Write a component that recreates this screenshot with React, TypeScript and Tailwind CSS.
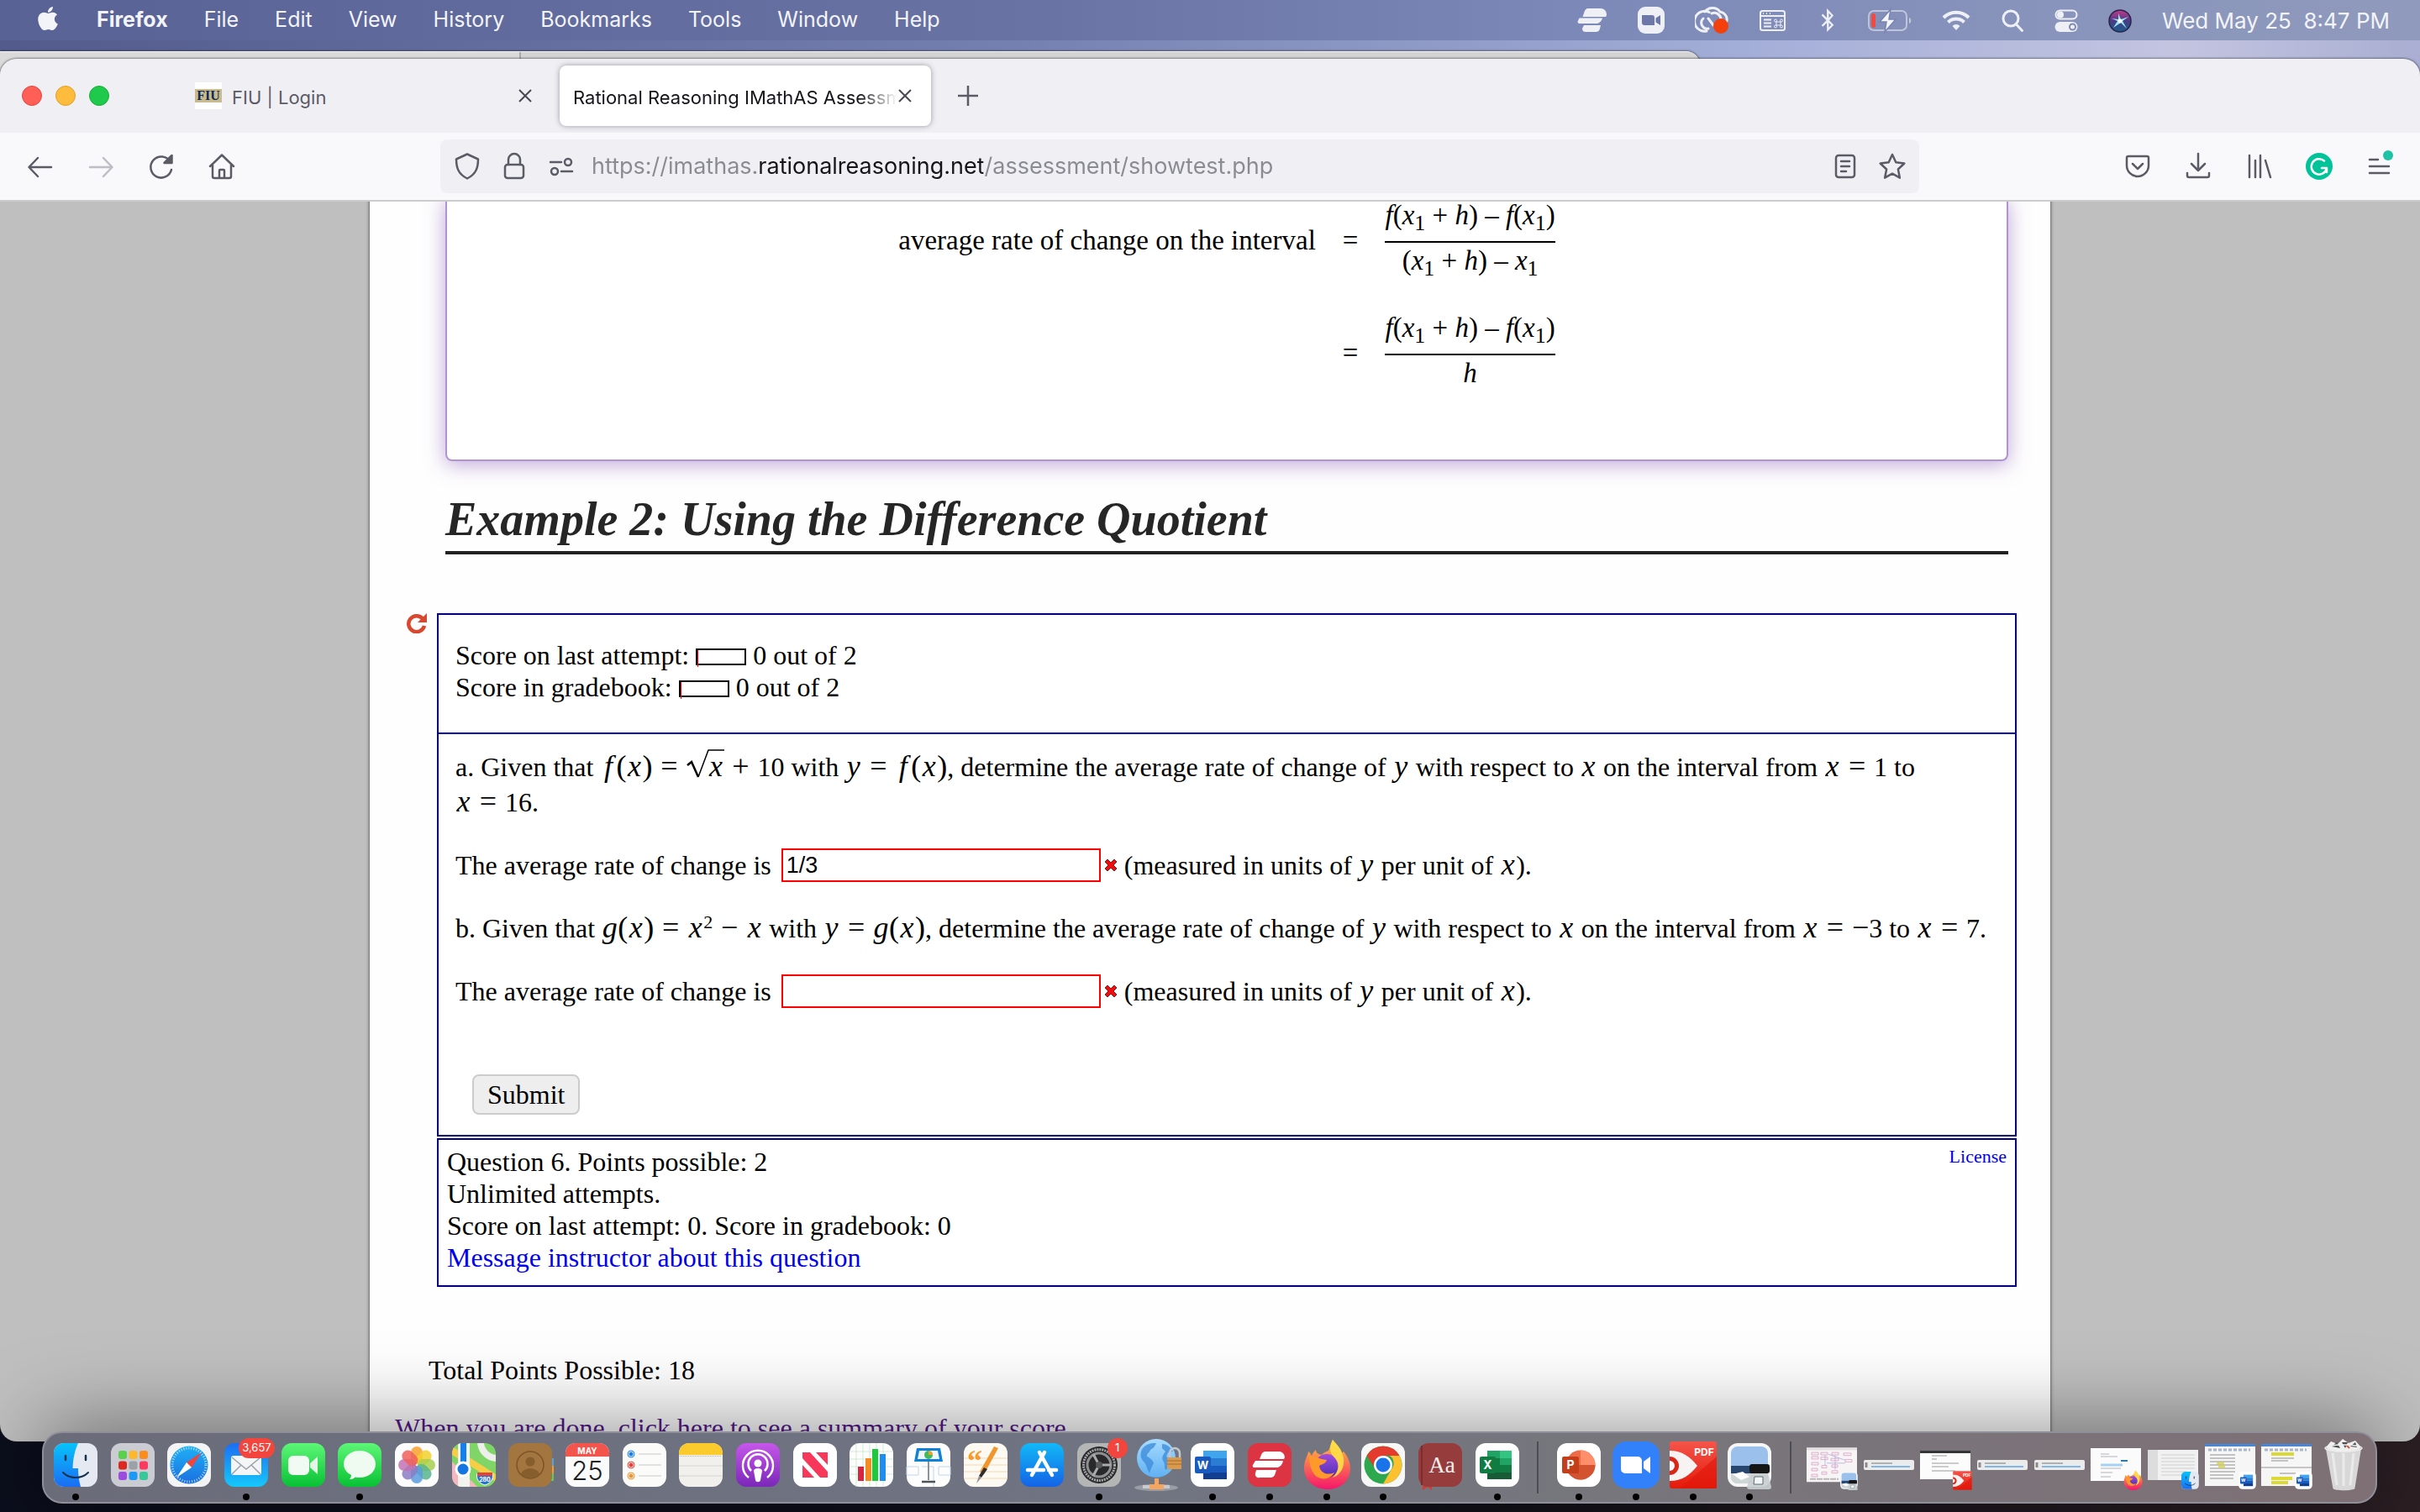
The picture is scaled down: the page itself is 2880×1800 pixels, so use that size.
import type { ReactNode } from 'react'
import { FaApple, FaBluetoothB } from 'react-icons/fa'

const MENUS = ['File', 'Edit', 'View', 'History', 'Bookmarks', 'Tools', 'Window', 'Help']

/* ---------- menu bar ---------- */

const StatusIcons: React.FC = () => (
    <>
        <svg className="h-8 w-9" viewBox="0 0 36 32" fill="#eef0f6" aria-hidden="true">
            <path d="M13 2h15a7 7 0 017 7c0 1-.3 2-.8 3H6.500l1.500-4.500C9 4 10.500 2 13 2z" />
            <path d="M2.500 13.500H30a9 9 0 01-6 6.500H2.500a2 2 0 01-1.800-2.700z" />
            <path d="M8 22h20l-1 4a5 5 0 01-5 4H10a4 4 0 01-4-4z" />
        </svg>
        <svg className="h-8 w-8" viewBox="0 0 32 32" aria-hidden="true">
            <rect width="32" height="32" rx="9" fill="#eef0f6" />
            <path d="M5 10h12a3 3 0 013 3v9H8a3 3 0 01-3-3zM21.500 13.500L27 10v12l-5.500-3.500z" fill="#6d78a9" />
        </svg>
        <svg className="h-8 w-10" viewBox="0 0 40 32" fill="none" aria-hidden="true">
            <path
                d="M14 29A12 12 0 1117 6.500M10 14a7 7 0 006 12M16 14l6 8M12 6c4-6 14-6 18 0 5 1 9 5 8 11M20 8c5-2 10 1 11 6"
                stroke="#eef0f6"
                strokeWidth="3"
                strokeLinecap="round"
            />
            <circle cx="31" cy="23" r="9" fill="#f4400c" />
        </svg>
        <svg className="h-8 w-[34px]" viewBox="0 0 34 32" fill="none" stroke="#eef0f6" aria-hidden="true">
            <rect x="2" y="5" width="29" height="23" rx="2.500" strokeWidth="2" />
            <path d="M2 11h29" strokeWidth="2" />
            <path d="M5 8h1M9 8h1M13 8h1" strokeWidth="2" />
            <path d="M6 15.500h9M6 19.500h9M6 23.500h9" strokeWidth="2" />
            <path
                d="M21 18h5v4h-5zM21 18h-1a1.500 1.500 0 111.500-1.500zM26 18h1a1.500 1.500 0 10-1.500-1.500zM21 22h-1a1.500 1.500 0 101.500 1.500zM26 22h1a1.500 1.500 0 11-1.500 1.500z"
                strokeWidth="1"
            />
        </svg>
        <FaBluetoothB className="h-7 w-6 text-[#eef0f6]" aria-hidden="true" />
        <svg className="h-8 w-[52px]" viewBox="0 0 52 32" fill="none" aria-hidden="true">
            <rect x="1" y="5" width="45" height="23" rx="6" stroke="#eef0f6" strokeOpacity=".55" strokeWidth="2" />
            <path d="M49 13c3 1 3 6 0 7z" fill="#eef0f6" fillOpacity=".6" />
            <rect x="4" y="8" width="5" height="17" rx="2.500" fill="#f5483f" />
            <path d="M27 3L14 18h8l-2 12 13-15h-8l2-12z" fill="#f4f5fa" stroke="#7984b2" strokeWidth="1.500" />
        </svg>
        <svg className="h-8 w-[34px]" viewBox="0 0 34 32" fill="none" stroke="#eef0f6" strokeWidth="4" aria-hidden="true">
            <path d="M2 13a21 21 0 0130 0M7.500 18.500a13.500 13.500 0 0119 0" />
            <path d="M17 28l-4.500-5a6 6 0 019 0z" fill="#eef0f6" stroke="none" />
        </svg>
        <svg className="h-8 w-7" viewBox="0 0 28 32" fill="none" stroke="#eef0f6" strokeWidth="3" aria-hidden="true">
            <circle cx="12" cy="14" r="9" />
            <path d="M18.500 21l7 7.500" strokeLinecap="round" />
        </svg>
        <svg className="h-8 w-7" viewBox="0 0 28 32" fill="none" aria-hidden="true">
            <rect x="1.500" y="4.500" width="25" height="10" rx="5" stroke="#eef0f6" strokeWidth="2" />
            <circle cx="7" cy="9.500" r="4" fill="#eef0f6" />
            <rect x=".5" y="18" width="27" height="12" rx="6" fill="#eef0f6" />
            <circle cx="21.500" cy="24" r="3.500" stroke="#7f8ab5" strokeWidth="2" />
        </svg>
        <svg className="h-8 w-7" viewBox="0 0 28 32" aria-hidden="true">
            <defs>
                <linearGradient id="siri" x1="0" y1="0" x2="0" y2="1">
                    <stop offset="0" stopColor="#c23a8b" />
                    <stop offset=".5" stopColor="#4b3a86" />
                    <stop offset="1" stopColor="#1a5f8c" />
                </linearGradient>
            </defs>
            <circle cx="14" cy="17" r="13" fill="url(#siri)" stroke="#272347" strokeWidth="1.500" />
            <path d="M12 8l3 7 9-3-7 5 5 9-7-7-9 6 5-8-7-3 8 1z" fill="#8fe6f2" />
            <circle cx="14" cy="17" r="2.500" fill="#ffffff" />
        </svg>
    </>
)

const MenuBar: React.FC = () => (
    <header className="flex h-12 shrink-0 items-center bg-[linear-gradient(90deg,#596295,#6873a4_42%,#7c88b7_65%,#8894bb_85%,#8f9abc)] pr-9 pl-[42px] text-[25px] text-[#f3f4f8]">
        <nav className="flex items-center gap-[43px]" aria-label="Application menu">
            <FaApple className="mb-1 h-8 w-[30px]" aria-hidden="true" />
            <button className="font-bold">Firefox</button>
            {MENUS.map((menu) => (
                <button key={menu}>{menu}</button>
            ))}
        </nav>
        <div className="ml-auto flex items-center gap-9">
            <StatusIcons />
            <span className="text-[26px] whitespace-pre">Wed May 25  8:47 PM</span>
        </div>
    </header>
)

/* ---------- browser chrome ---------- */

const CloseIcon: React.FC = () => (
    <svg className="h-[18px] w-[18px]" viewBox="0 0 18 18" stroke="#4a4953" strokeWidth="2" aria-hidden="true">
        <path d="M2 2l14 14M16 2L2 16" />
    </svg>
)

const TabStrip: React.FC = () => (
    <div className="flex h-[88px] items-center bg-[#f0eff4] pl-[26px]">
        <div className="flex gap-4">
            <button aria-label="Close window" className="h-6 w-6 rounded-full border border-[#e2463f] bg-[#ff5f57]" />
            <button aria-label="Minimize window" className="h-6 w-6 rounded-full border border-[#dfa023] bg-[#febc3f]" />
            <button aria-label="Zoom window" className="h-6 w-6 rounded-full border border-[#1aaa35] bg-[#1fc94c]" />
        </div>
        <div className="ml-[86px] flex items-center gap-2 text-[22px]">
            <div className="flex h-[72px] w-[442px] items-center gap-3 pr-6 pl-4 text-[#5b5b66]">
                <span className="flex h-8 w-8 items-center justify-center bg-white">
                    <span className="w-full bg-[#c9bb8e] text-center font-[Liberation_Serif] text-[16px] leading-4 font-bold text-[#0b2a55]">
                        FIU
                    </span>
                </span>
                <span className="flex-1 pt-1">FIU | Login</span>
                <button aria-label="Close tab">
                    <CloseIcon />
                </button>
            </div>
            <div className="flex h-[72px] w-[442px] items-center rounded-lg bg-white pr-[22px] pl-4 text-[#15141a] shadow-[0_0_6px_rgba(80,80,90,0.55)]">
                <span className="flex-1 overflow-hidden pt-1 whitespace-nowrap mask-[linear-gradient(90deg,#000_88%,transparent)]">
                    Rational Reasoning IMathAS Assessment
                </span>
                <button aria-label="Close tab">
                    <CloseIcon />
                </button>
            </div>
            <button aria-label="New tab" className="ml-[22px]">
                <svg className="h-7 w-7" viewBox="0 0 28 28" stroke="#5b5b66" strokeWidth="2.500" aria-hidden="true">
                    <path d="M14 2v24M2 14h24" />
                </svg>
            </button>
        </div>
    </div>
)

const ToolIcon: React.FC<{ label: string; color?: string; children: ReactNode }> = ({
    label,
    color = '#5b5b66',
    children,
}) => (
    <button aria-label={label}>
        <svg
            className="h-8 w-8 overflow-visible"
            viewBox="0 0 32 32"
            fill="none"
            stroke={color}
            strokeWidth="2.500"
            strokeLinecap="round"
            strokeLinejoin="round"
            aria-hidden="true"
        >
            {children}
        </svg>
    </button>
)

const Toolbar: React.FC = () => (
    <div className="flex h-20 items-center bg-[#f9f9fb] px-8">
        <div className="flex gap-10">
            <ToolIcon label="Back">
                <path d="M29 17H3M13 6L2.500 17 13 28" />
            </ToolIcon>
            <ToolIcon label="Forward" color="#bdbdc4">
                <path d="M3 17h26M19 6l10.500 11L19 28" />
            </ToolIcon>
            <ToolIcon label="Reload">
                <path d="M26.500 10.500A12.500 12.500 0 1028 20" />
                <path d="M28.500 3v9h-9z" fill="#5b5b66" />
            </ToolIcon>
            <ToolIcon label="Home">
                <path d="M2 16L16 2.500 30 16M5 14v14a2 2 0 002 2h18a2 2 0 002-2V14M13 29v-8a1 1 0 011-1h4a1 1 0 011 1v8" />
            </ToolIcon>
        </div>
        <div className="mx-[244px] flex h-16 flex-1 items-center rounded-lg bg-[#f0eff4] px-4">
            <div className="flex gap-6">
                <ToolIcon label="Tracking protection">
                    <path d="M16 1.500L29 7.500c0 11-3 18-13 23C6 25.500 3 18.500 3 7.500z" />
                </ToolIcon>
                <ToolIcon label="Connection secure">
                    <rect x="5" y="14" width="22" height="16" rx="3" />
                    <path d="M9 14V8a7 7 0 0114 0v6" />
                </ToolIcon>
                <ToolIcon label="Permissions">
                    <circle cx="24" cy="11" r="4" />
                    <circle cx="8" cy="22" r="4" />
                    <path d="M3 11h13M16 22h13" />
                </ToolIcon>
            </div>
            <input
                aria-label="Address"
                className="ml-5 min-w-0 flex-1 bg-[linear-gradient(90deg,#8a8a92_198px,#15141a_198px,#15141a_466px,#8a8a92_466px)] bg-clip-text text-[27px] text-transparent outline-none"
                defaultValue="https://imathas.rationalreasoning.net/assessment/showtest.php"
            />
            <div className="flex gap-6">
                <ToolIcon label="Reader view">
                    <rect x="5" y="3" width="22" height="26" rx="3" />
                    <path d="M11 10h10M11 16h10M11 22h6" />
                </ToolIcon>
                <ToolIcon label="Bookmark this page">
                    <path d="M16 2l4.300 9.300 10 1.200-7.400 7 2 10.200L16 24.700 7.100 29.700l2-10.200-7.400-7 10-1.200z" />
                </ToolIcon>
            </div>
        </div>
        <div className="flex gap-10">
            <ToolIcon label="Save to Pocket">
                <path d="M5 4h22a2 2 0 012 2v9a13 13 0 01-26 0V6a2 2 0 012-2zM10 13l6 6 6-6" />
            </ToolIcon>
            <ToolIcon label="Downloads">
                <path d="M16 1v20M8 13l8 8 8-8M3 24v3a2 2 0 002 2h22a2 2 0 002-2v-3" />
            </ToolIcon>
            <ToolIcon label="Library">
                <path d="M5 3v26M12 9v20M18 3v26M24 9l6 20" />
            </ToolIcon>
            <ToolIcon label="Grammarly">
                <circle cx="16" cy="16" r="16" fill="#00c39a" stroke="none" />
                <path d="M22 9.500A9.200 9.200 0 1025 18h-6M25 18v5" stroke="#ffffff" />
            </ToolIcon>
            <ToolIcon label="Open application menu">
                <path d="M4 8h10M4 16h23M4 24h23" />
                <circle cx="26" cy="3" r="6" fill="#1ec2a4" stroke="none" />
            </ToolIcon>
        </div>
    </div>
)

/* ---------- math helpers ---------- */

const V: React.FC<{ children: ReactNode }> = ({ children }) => (
    <i className="inline-block w-[19px] text-center text-[36px] leading-none">{children}</i>
)

const P: React.FC<{ children: ReactNode }> = ({ children }) => (
    <span className="inline-block w-3 text-center text-[36px] leading-none">{children}</span>
)

const Op: React.FC<{ children: ReactNode }> = ({ children }) => (
    <span className="inline-block w-10 text-center text-[36px] leading-none">{children}</span>
)

const Fn: React.FC<{ name: string }> = ({ name }) => (
    <>
        <V>{name}</V>
        <P>(</P>
        <V>x</V>
        <P>)</P>
    </>
)

const Sqrt: React.FC = () => (
    <span className="relative inline-block pl-[26px]">
        <svg
            className="absolute -top-px left-0 h-9 w-[46px]"
            viewBox="0 0 46 36"
            fill="none"
            stroke="black"
            aria-hidden="true"
        >
            <path d="M2 20l5-4 8 18" strokeWidth="2.500" />
            <path d="M15 34L27 2h19" strokeWidth="1.500" />
        </svg>
        <V>x</V>
    </span>
)

const Sub1: React.FC = () => <sub className="text-[26px]">1</sub>

const Fraction: React.FC<{ top: ReactNode; bottom: ReactNode }> = ({ top, bottom }) => (
    <div className="min-w-[201px] text-center whitespace-nowrap">
        <div className="h-[54px] border-b-2 border-black pt-0.5">{top}</div>
        <div className="h-[38px] pt-0.5">{bottom}</div>
    </div>
)

const Quotient = (
    <>
        <i>f</i>(<i>x</i>
        <Sub1 /> + <i>h</i>) – <i>f</i>(<i>x</i>
        <Sub1 />)
    </>
)

/* ---------- assessment page ---------- */

const ScoreLine: React.FC<{ label: string }> = ({ label }) => (
    <div className="flex items-center">
        {label}
        <span className="mt-1 mr-2 ml-2 h-5 w-[60px] border-2 border-black">
            <span className="block h-5 w-px bg-[#ff0000]" />
        </span>
        0 out of 2
    </div>
)

const Answer: React.FC<{ id: string; value: string }> = ({ id, value }) => (
    <div className="flex items-center">
        <label htmlFor={id}>The average rate of change is</label>
        <input
            id={id}
            defaultValue={value}
            className="ml-3 h-10 w-[380px] border-2 border-[#ff0000] bg-white px-1 font-[Liberation_Sans] text-[27px] outline-none"
        />
        <svg className="mr-2 ml-1 h-4 w-4" viewBox="0 0 16 16" aria-label="Incorrect">
            <path
                d="M4 1l4 4 4-4 3 3-4 4 4 4-3 3-4-4-4 4-3-3 4-4-4-4z"
                fill="#f10d0d"
                stroke="#7b2020"
                strokeWidth="1"
            />
        </svg>
        <span>
            (measured in units of <V>y</V> per unit of <V>x</V>).
        </span>
    </div>
)

const Question: React.FC = () => (
    <div className="mt-[70px] flex gap-3 pr-10 pl-11">
        <button aria-label="Try a similar question" className="h-6 w-6">
            <svg className="h-6 w-6" viewBox="0 0 24 24" fill="none" aria-hidden="true">
                <path d="M19 6.500A9.500 9.500 0 1021 15" stroke="#d9472f" strokeWidth="4.500" />
                <path d="M24 0v11H13z" fill="#d9472f" />
            </svg>
        </button>
        <div className="flex-1">
            <section className="border-2 border-[#000080] bg-white">
                <div className="border-b-2 border-[#000080] pt-[29px] pb-[35px] pl-5">
                    <ScoreLine label="Score on last attempt:" />
                    <ScoreLine label="Score in gradebook:" />
                </div>
                <form className="flex flex-col gap-[33px] px-5 pt-[18px] pb-6 leading-[42px]">
                    <p>
                        a. Given that{' '}
                        <span className="whitespace-nowrap">
                            <Fn name="f" />
                            <Op>=</Op>
                            <Sqrt />
                            <Op>+</Op>10
                        </span>{' '}
                        with{' '}
                        <span className="whitespace-nowrap">
                            <V>y</V>
                            <Op>=</Op>
                            <Fn name="f" />,
                        </span>{' '}
                        determine the average rate of change of <V>y</V> with respect to <V>x</V> on the interval from{' '}
                        <span className="whitespace-nowrap">
                            <V>x</V>
                            <Op>=</Op>1
                        </span>{' '}
                        to{' '}
                        <span className="whitespace-nowrap">
                            <V>x</V>
                            <Op>=</Op>16.
                        </span>
                    </p>
                    <Answer id="qn0" value="1/3" />
                    <p>
                        b. Given that{' '}
                        <span className="whitespace-nowrap">
                            <Fn name="g" />
                            <Op>=</Op>
                            <V>x</V>
                            <sup className="text-[22px]">2</sup>
                            <Op>−</Op>
                            <V>x</V>
                        </span>{' '}
                        with{' '}
                        <span className="whitespace-nowrap">
                            <V>y</V>
                            <Op>=</Op>
                            <Fn name="g" />,
                        </span>{' '}
                        determine the average rate of change of <V>y</V> with respect to <V>x</V> on the interval from{' '}
                        <span className="whitespace-nowrap">
                            <V>x</V>
                            <Op>=</Op>
                            <span className="text-[36px] leading-none">−</span>3
                        </span>{' '}
                        to{' '}
                        <span className="whitespace-nowrap">
                            <V>x</V>
                            <Op>=</Op>7.
                        </span>
                    </p>
                    <Answer id="qn1" value="" />
                    <button
                        type="button"
                        className="mt-[45px] ml-5 h-12 self-start rounded-lg border-2 border-[#cccccc] bg-[#eeeeee] px-4 leading-none"
                    >
                        Submit
                    </button>
                </form>
            </section>
            <section className="mt-0.5 flex justify-between border-2 border-[#000080] bg-white pt-[7px] pr-[10px] pb-[14px] pl-[10px]">
                <div>
                    <p>Question 6. Points possible: 2</p>
                    <p>Unlimited attempts.</p>
                    <p>Score on last attempt: 0. Score in gradebook: 0</p>
                    <a href="#message" className="text-[#0000ee]">
                        Message instructor about this question
                    </a>
                </div>
                <a href="#license" className="text-[22px] leading-[26px] text-[#0000ee]">
                    License
                </a>
            </section>
        </div>
    </div>
)

const AssessmentPage: React.FC = () => (
    <main className="flex-1 overflow-hidden border-t-2 border-[#cccccc] bg-[#bfbfbf] font-[Liberation_Serif,serif] text-[32px] leading-[38px] text-black">
        <div className="mx-auto min-h-full max-w-[2000px] bg-[#fefefe] shadow-[0_0_4px_#333333]">
            <div className="mr-[50px] ml-[90px]">
                <div className="rounded-b-lg border-2 border-t-0 border-[#b193d1] bg-white shadow-[0_4px_24px_rgba(130,80,180,0.5)]">
                    <div className="-mt-[5px] grid grid-cols-[auto_auto_auto] items-start justify-center gap-x-8 gap-y-[42px] pb-[86px] text-[33px]">
                        <p className="mt-8">average rate of change on the interval</p>
                        <span className="mt-8">=</span>
                        <Fraction
                            top={Quotient}
                            bottom={
                                <>
                                    (<i>x</i>
                                    <Sub1 /> + <i>h</i>) – <i>x</i>
                                    <Sub1 />
                                </>
                            }
                        />
                        <span className="col-start-2 mt-8">=</span>
                        <Fraction top={Quotient} bottom={<i>h</i>} />
                    </div>
                </div>
                <h2 className="mt-[37px] border-b-4 border-[#222222] pb-1.5 text-[56px] leading-[64px] font-bold text-[#262626] italic">
                    Example 2: Using the Difference Quotient
                </h2>
            </div>
            <Question />
            <p className="mt-20 pl-[70px]">Total Points Possible: 18</p>
            <a href="#summary" className="mt-[31px] block pl-[30px] text-[#551a8b]">
                When you are done, click here to see a summary of your score
            </a>
        </div>
    </main>
)

/* ---------- dock ---------- */

const Tile: React.FC<{ fill: string }> = ({ fill }) => <rect width="52" height="52" rx="12" fill={fill} />

const FinderArt = (
    <>
        <Tile fill="#e4e9f2" />
        <path d="M12 0h17c-4 9-6 18-6.500 30H29c0 8 1 15 3 22H12A12 12 0 010 40V12A12 12 0 0112 0z" fill="url(#finder)" />
        <path d="M14 15v5M38 15v5" stroke="#16324f" strokeWidth="2.500" strokeLinecap="round" />
        <path d="M11 35c8 8 22 8 30 0" fill="none" stroke="#16324f" strokeWidth="2" strokeLinecap="round" />
    </>
)

const WordArt = (
    <>
        <Tile fill="#ffffff" />
        <path d="M15 9h28v9H15z" fill="#41a5ee" />
        <path d="M15 18h28v9H15z" fill="#2b7cd3" />
        <path d="M15 27h28v8H15z" fill="#185abd" />
        <path d="M15 35h28v8H15z" fill="#103f91" />
        <rect x="5" y="16" width="19" height="20" rx="2" fill="#185abd" />
        <text x="14.500" y="31" textAnchor="middle" fontSize="13" fontWeight="700" fill="#ffffff">
            W
        </text>
    </>
)

const FirefoxArt = (
    <>
        <path
            d="M-1 30C-1 20 3 16 4 10c2 1 3 3 4 5 1-3 3-5 5-7 0 4 3 5 7 6 2-3 6-4 8-5 2-4 3-9 5-13 4 5 9 9 11 16l2-2c5 6 8 13 8 20 0 15-12 25-27 25S-1 45-1 30z"
            fill="url(#fox)"
        />
        <circle cx="26" cy="27" r="14" fill="url(#foxglobe)" />
        <path d="M5 16c6-1 10 2 15 3l6 1c-2 5-6 5-9 7 1 8 9 12 18 8-5 9-18 10-24 2C7 32 5 24 5 16z" fill="#ff9a2a" />
        <path d="M33-4c4 5 10 10 12 18 4 12-2 24-12 27 9-9 8-18 1-25-5-5-5-13-1-20z" fill="#ffdf48" opacity=".9" />
    </>
)

const PdfArt = (
    <>
        <rect x="-2" y="-2" width="56" height="56" rx="3" fill="url(#pdf)" />
        <path d="M54 16v38H10z" fill="#e01608" opacity=".6" />
        <path d="M-2 9c15 0 24 7 33 18C22 38 13 45-2 45z" fill="#f6f3f2" />
        <path d="M-2 16a11 11 0 010 22z" fill="#d92616" />
        <path d="M-2 21a6 6 0 010 12z" fill="#ffffff" />
        <text x="39" y="15" textAnchor="middle" fontSize="12" fontWeight="700" fill="#ffffff">
            PDF
        </text>
    </>
)

const PreviewArt = (
    <>
        <Tile fill="#f6f6f6" />
        <rect x="4" y="4" width="44" height="44" rx="8" fill="#9cc0ec" />
        <path d="M4 27h44v9H4z" fill="#27476f" />
        <path d="M4 36h44v4a8 8 0 01-8 8H12a8 8 0 01-8-8z" fill="#cfd6d6" />
        <path d="M6 37l12-3 8 6-10 4z" fill="#ffffff" />
        <rect x="26" y="25" width="24" height="11" rx="3" fill="#161616" />
        <path d="M28 36h20l4 16a3 3 0 01-3 3H26a3 3 0 01-3-3z" fill="#c9cfd1" opacity=".9" />
        <path d="M32 40h10v9H31z" fill="#f2f6f7" stroke="#5d6b73" />
    </>
)

type DockApp = { name: string; running?: boolean; badge?: string; art: ReactNode }

const PETALS = ['#f7a02c', '#f3d02d', '#a8cf4e', '#57b58f', '#5a9ede', '#8a7cc4', '#c173b4', '#f0605c']

const APPS: DockApp[] = [
    { name: 'Finder', running: true, art: FinderArt },
    {
        name: 'Launchpad',
        art: (
            <>
                <Tile fill="#cbccd3" />
                {['#5ad04c', '#fdb92b', '#fb8d1e', '#dd2a1f', '#9aa2a8', '#fb3a62', '#9b4be0', '#1d98f5', '#39c79a'].map(
                    (c, i) => (
                        <rect key={c} x={9 + (i % 3) * 12.5} y={9 + Math.floor(i / 3) * 12.5} width="10" height="10" rx="3" fill={c} />
                    ),
                )}
            </>
        ),
    },
    {
        name: 'Safari',
        art: (
            <>
                <Tile fill="#f4f4f4" />
                <circle cx="26" cy="26" r="22.500" fill="url(#safari)" />
                <circle cx="26" cy="26" r="20" fill="none" stroke="#ffffff" strokeOpacity=".7" strokeWidth="3" strokeDasharray="1 2" />
                <path d="M41 11L29 29l-6-6z" fill="#f2443b" />
                <path d="M11 41l12-18 6 6z" fill="#ffffff" />
            </>
        ),
    },
    {
        name: 'Mail',
        running: true,
        badge: '3,657',
        art: (
            <>
                <Tile fill="url(#mail)" />
                <rect x="8" y="15" width="36" height="23" rx="3" fill="#f3f5f7" />
                <path d="M9 17l17 14 17-14M9 37l11-11M43 37L32 26" fill="none" stroke="#9aa3ab" strokeWidth="1.500" />
            </>
        ),
    },
    {
        name: 'FaceTime',
        art: (
            <>
                <Tile fill="url(#green)" />
                <rect x="8" y="15" width="25" height="23" rx="6" fill="#f2fbf3" />
                <path d="M34 24l9-8v21l-9-8z" fill="#e4f6e6" />
            </>
        ),
    },
    {
        name: 'Messages',
        running: true,
        art: (
            <>
                <Tile fill="url(#green)" />
                <path d="M26 9c11 0 19 7 19 16s-8 16-19 16c-2 0-4 0-5-.6-2 1.600-4 2.600-7 2.600 1-1.500 2-3 2-5-6-3-9-8-9-13 0-9 8-16 19-16z" fill="#effaf0" />
            </>
        ),
    },
    {
        name: 'Photos',
        art: (
            <>
                <Tile fill="#fdfdfd" />
                {PETALS.map((c, i) => (
                    <rect key={c} x="19" y="4" width="14" height="21" rx="7" fill={c} fillOpacity=".85" transform={`rotate(${i * 45} 26 26)`} />
                ))}
            </>
        ),
    },
    {
        name: 'Maps',
        art: (
            <g clipPath="url(#tile)">
                <Tile fill="#7fd667" />
                <path d="M52 22A24 24 0 0130 0h8a16 16 0 0014 14z" fill="#eeeeea" />
                <path d="M0 14l52 32v-9L0 4z" fill="#f7cf46" />
                <path d="M0 22l30 30H0z" fill="#f4b7c0" />
                <path d="M7 0h14v52H7z" fill="#f2f2ef" />
                <path d="M10 0h7v30h-7z" fill="#1580ec" />
                <circle cx="13" cy="31" r="8" fill="#1475e3" stroke="#ffffff" strokeWidth="3" />
                <path d="M30 36c5 1 13 1 18 0 2 6-2 12-9 14-7-2-11-8-9-14z" fill="#2a6fd2" stroke="#ffffff" />
                <path d="M30 35h18v4H30z" fill="#e1433b" />
                <text x="39" y="46" textAnchor="middle" fontSize="7" fontWeight="700" fill="#ffffff">
                    280
                </text>
            </g>
        ),
    },
    {
        name: 'Contacts',
        art: (
            <>
                <path d="M46 18h8v9h-8z" fill="#4ba7e6" />
                <path d="M46 27h8v9h-8z" fill="#f49a31" />
                <path d="M46 36h8v9h-8z" fill="#5fc95b" />
                <Tile fill="#a3753f" />
                <circle cx="26" cy="26" r="16" fill="none" stroke="#7b5426" strokeWidth="1.500" />
                <circle cx="26" cy="22" r="5.500" fill="#865d2d" />
                <path d="M15 37c2-9 20-9 22 0-6 6-16 6-22 0z" fill="#865d2d" />
            </>
        ),
    },
    {
        name: 'Calendar',
        art: (
            <>
                <Tile fill="#fbfbfb" />
                <path d="M12 0h28a12 12 0 0112 12v4H0v-4A12 12 0 0112 0z" fill="#f3544b" />
                <text x="26" y="12.500" textAnchor="middle" fontSize="10" fontWeight="700" fill="#ffffff">
                    MAY
                </text>
                <text x="26" y="44" textAnchor="middle" fontSize="31" fontWeight="300" fill="#1d1d1f">
                    25
                </text>
            </>
        ),
    },
    {
        name: 'Reminders',
        art: (
            <>
                <Tile fill="#fbfbfa" />
                {['#167efb', '#f03e36', '#f4932a'].map((c, i) => (
                    <g key={c} transform={`translate(0 ${i * 13})`}>
                        <circle cx="10" cy="13" r="2.500" fill={c} />
                        <circle cx="10" cy="13" r="4" fill="none" stroke={c} />
                        <path d="M19 13h27" stroke="#c8c8c8" />
                    </g>
                ))}
            </>
        ),
    },
    {
        name: 'Notes',
        art: (
            <>
                <Tile fill="#f1f0ec" />
                <path d="M12 0h28a12 12 0 0112 12v2H0v-2A12 12 0 0112 0z" fill="#fbcb2e" />
                <path d="M1 15.500h50" stroke="#b9b4a4" strokeDasharray="1 1" />
                <path d="M0 27h52M0 39h52" stroke="#d6d4ce" />
            </>
        ),
    },
    {
        name: 'Podcasts',
        art: (
            <>
                <Tile fill="url(#podcasts)" />
                <g fill="none" stroke="#ffffff" strokeWidth="2.500">
                    <path d="M15 41a18 18 0 1122 0" />
                    <path d="M18 33a11.500 11.500 0 1116 0" />
                </g>
                <circle cx="26" cy="24" r="4.500" fill="#ffffff" />
                <path d="M21 33c0-4 10-4 10 0l-2 11c-.5 3-5.500 3-6 0z" fill="#ffffff" />
            </>
        ),
    },
    {
        name: 'News',
        art: (
            <>
                <Tile fill="#ffffff" />
                <path d="M11 11h9l21 23v7h-9L11 18z" fill="#f8385a" />
                <path d="M27 11h14v15zM11 26l14 15H11z" fill="#f8385a" />
            </>
        ),
    },
    {
        name: 'Numbers',
        art: (
            <>
                <Tile fill="#fdfdfd" />
                <path d="M8 0v52M16 0v52M24 0v52M32 0v52M40 0v52M0 10h52M0 19h52M0 28h52M0 37h52" stroke="#bfe3bf" strokeWidth=".7" />
                <path d="M10 28h7v17h-7z" fill="#d7263d" />
                <path d="M19 18h7v27h-7z" fill="#f58b1f" />
                <path d="M27 7h7v38h-7z" fill="#1fc83f" />
                <path d="M36 13h7v32h-7z" fill="#1e8df2" />
            </>
        ),
    },
    {
        name: 'Keynote',
        art: (
            <>
                <Tile fill="#fdfdfd" />
                <path d="M0 28h14v10H0zM18 28h14v24M38 28h14v10H38z" fill="none" stroke="#bfd6ee" />
                <path d="M12 6h28l3 16H9z" fill="#0f82d8" />
                <path d="M15 9h22l2 10H13z" fill="#f2f6fa" />
                <circle cx="26" cy="14" r="5" fill="#42b95a" />
                <path d="M26 14V9a5 5 0 015 5z" fill="#f0a12d" />
                <path d="M26 22v22" stroke="#8a929a" strokeWidth="2" />
                <path d="M18 46h16" stroke="#4b535b" strokeWidth="2.500" />
            </>
        ),
    },
    {
        name: 'Pages',
        art: (
            <>
                <Tile fill="#fdfaf4" />
                <path d="M0 18h52M0 26h52M0 34h52M0 42h52" stroke="#f5d7b2" />
                <text x="4" y="33" fontSize="36" fontWeight="700" fontFamily="Liberation Serif" fill="#f79b2e">
                    “
                </text>
                <path d="M36 4l5 2-17 31-5-3z" fill="#f0962c" />
                <path d="M24 29l4 2-7 10-3-2z" fill="#2e2e30" />
                <path d="M18 39l3 2-6 7z" fill="#8d9195" />
            </>
        ),
    },
    {
        name: 'App Store',
        art: (
            <>
                <Tile fill="url(#store)" />
                <path d="M29 11L14 38M23 11l15 27M9 32h19M34 32h9" stroke="#ffffff" strokeWidth="4.500" strokeLinecap="round" />
            </>
        ),
    },
    {
        name: 'System Preferences',
        running: true,
        badge: '1',
        art: (
            <>
                <Tile fill="#b4b6b5" />
                <circle cx="26" cy="26" r="22" fill="#29292b" />
                <circle cx="26" cy="26" r="18.500" fill="none" stroke="#a4a6a8" strokeWidth="3" strokeDasharray="2 1" />
                <circle cx="26" cy="26" r="14" fill="none" stroke="#8d8f91" strokeWidth="3" />
                <path d="M26 26h14M26 26L19 13M26 26l-7 13" stroke="#a9abad" strokeWidth="3" />
                <circle cx="26" cy="26" r="4" fill="#56585a" />
            </>
        ),
    },
    {
        name: 'VPN',
        art: (
            <>
                <ellipse cx="26" cy="53" rx="26" ry="4" fill="#9a9da6" />
                <path d="M10 50h32v4H10z" fill="#c8cacd" />
                <path d="M24 42h5v7h6v6H18v-6h6z" fill="#f5a55e" />
                <circle cx="26" cy="18" r="23" fill="url(#globe)" />
                <path
                    d="M10 6c5-6 12-6 16-6-2 5-4 6-7 8-1 4-5 4-4 8 3 1 7 4 8 8-2 4-4 7-5 12-3-4-3-9-6-13C7 19 6 12 10 6zM33 1c6 0 11 5 13 9l-6 1-2 5 6 4c0 6-4 10-7 12-2-4 0-8-3-11-2-5 1-8 3-11l-4-4z"
                    fill="#3f8ddb"
                    opacity=".8"
                />
                <path d="M42 18v-6a6 6 0 0112 0v6" fill="none" stroke="#c4c8ce" strokeWidth="2.500" />
                <rect x="39" y="17" width="17" height="14" rx="1" fill="#d99a4e" />
                <path d="M39 21h17M39 25h17" stroke="#a86d2a" />
            </>
        ),
    },
    { name: 'Word', running: true, art: WordArt },
    {
        name: 'ExpressVPN',
        running: true,
        art: (
            <>
                <Tile fill="#dc3442" />
                <path d="M21 10h16a7 7 0 017 7l-1 2H14l2-5c1-3 3-4 5-4zM9 21h33a10 10 0 01-6 8H8a2 2 0 01-2-3zM10 32h24l-2 6a5 5 0 01-4 3H14a4 4 0 01-5-5z" fill="#ffffff" />
            </>
        ),
    },
    { name: 'Firefox', running: true, art: FirefoxArt },
    {
        name: 'Chrome',
        running: true,
        art: (
            <>
                <Tile fill="#f7f7f7" />
                <circle cx="26" cy="26" r="22.500" fill="#2da84f" />
                <path d="M6.500 15A22.500 22.500 0 0145.500 15H26L17 31z" fill="#e33b2e" />
                <path d="M45.500 15A22.500 22.500 0 0126 48.500L36 31a11 11 0 00-2-16z" fill="#fdc02f" />
                <circle cx="26" cy="26" r="11" fill="#ffffff" />
                <circle cx="26" cy="26" r="8.500" fill="#1a73e8" />
            </>
        ),
    },
    {
        name: 'Dictionary',
        art: (
            <>
                <path d="M5 44h11v12l-5-4-6 4z" fill="#d9382c" />
                <Tile fill="#973c3c" />
                <path d="M4 3v47" stroke="#7d2b2d" strokeWidth="2" />
                <text x="28" y="35" textAnchor="middle" fontSize="27" fontFamily="Liberation Serif" fill="#f3eeee">
                    Aa
                </text>
            </>
        ),
    },
    {
        name: 'Excel',
        running: true,
        art: (
            <>
                <Tile fill="#ffffff" />
                <path d="M14 9h15v9H14z" fill="#21a366" />
                <path d="M29 9h14v9H29z" fill="#33c481" />
                <path d="M14 18h29v17H14z" fill="#107c41" />
                <path d="M29 18h14v8H29z" fill="#21a366" />
                <path d="M14 35h29v8H14z" fill="#185c37" />
                <rect x="5" y="16" width="19" height="20" rx="2" fill="#107c41" />
                <text x="14.500" y="31" textAnchor="middle" fontSize="14" fontWeight="700" fill="#ffffff">
                    X
                </text>
            </>
        ),
    },
]

const RECENT_APPS: DockApp[] = [
    {
        name: 'PowerPoint',
        running: true,
        art: (
            <>
                <Tile fill="#ffffff" />
                <circle cx="28" cy="26" r="17.500" fill="#ed6c47" />
                <path d="M28 8.500A17.500 17.500 0 0145.500 26H28z" fill="#ff8f6b" />
                <path d="M10.500 26h35a17.500 17.500 0 01-35 0z" fill="#d35230" />
                <rect x="6" y="16" width="20" height="20" rx="2" fill="#c43e1c" />
                <text x="16" y="31" textAnchor="middle" fontSize="14" fontWeight="700" fill="#ffffff">
                    P
                </text>
            </>
        ),
    },
    {
        name: 'Zoom',
        running: true,
        art: (
            <>
                <rect x="-2" y="-2" width="56" height="56" rx="16" fill="#3380fb" />
                <path d="M8 16h20a5 5 0 015 5v15H13a5 5 0 01-5-5zM35 22l8-6v20l-8-6z" fill="#ffffff" />
            </>
        ),
    },
    { name: 'PDF Expert', running: true, art: PdfArt },
    { name: 'Preview', running: true, art: PreviewArt },
]

const ProgressWindow = (
    <>
        <rect x="-4" y="20" width="60" height="12" rx="2" fill="#ebebeb" />
        <path d="M-1 23v6" stroke="#8b8b8b" strokeWidth="3" />
        <path d="M5 28h46" stroke="#7fb7ea" strokeWidth="2" />
        <path d="M5 24h25" stroke="#777777" />
    </>
)

/* Minimised windows: a small page drawing and the badge of its app. */
const MINIMISED: { name: string; art: ReactNode; badge?: ReactNode }[] = [
    {
        name: 'Diagram',
        badge: PreviewArt,
        art: (
            <>
                <path d="M-4 5h60v58H-4z" fill="#f7f4f6" />
                <path d="M-4 5h60v4H-4z" fill="#e3e0e2" />
                <g stroke="#d9a3c2" fill="#fbf1f6">
                    <path d="M2 13h8v4H2zM13 13h8v4h-8zM26 13h8v4h-8zM40 14h9v4h-9zM2 20h8v4H2zM13 21h8v4h-8zM25 23h9v4h-9zM42 25h8v4h-8zM2 30h8v4H2zM26 34h7v4h-7zM14 35h6v4h-6zM2 40h7v4H2zM26 44h7v4h-7zM14 46h6v4h-6zM2 50h7v4H2z" />
                </g>
                <path d="M18 17v18M30 18v24M22 16l20 10M20 31h22" stroke="#b3b0de" />
                <path d="M0 58h34" stroke="#bbb6ba" strokeWidth="3" strokeDasharray="7 1" />
            </>
        ),
    },
    { name: 'Opening PowerPoint', art: ProgressWindow },
    {
        name: 'PDF document',
        badge: PdfArt,
        art: (
            <>
                <path d="M-4 9h60v34H-4z" fill="#fcfcfc" />
                <path d="M-4 9h60v3H-4z" fill="#333735" />
                <path d="M10 15h18M10 19h6M10 24h32M10 28h20M10 33h28" stroke="#9a9a9a" />
            </>
        ),
    },
    { name: 'Opening Excel', art: ProgressWindow },
    { name: 'Opening Word', art: ProgressWindow },
    {
        name: 'Firefox window',
        badge: FirefoxArt,
        art: (
            <>
                <path d="M-4 6h60v39H-4z" fill="#fbfbfb" />
                <path d="M8 13h10M8 16h20M8 30h24M8 35h14M8 40h12" stroke="#b0b4bd" />
                <path d="M8 26h26" stroke="#a5d1f2" strokeWidth="3" />
                <path d="M32 21h8" stroke="#2a7ab8" strokeWidth="2" />
            </>
        ),
    },
    {
        name: 'Finder window',
        badge: FinderArt,
        art: (
            <>
                <path d="M-4 8h60v36H-4z" fill="#f1f1f1" />
                <path d="M-4 8H8v36H-4z" fill="#dddddd" />
                <path d="M12 14h40M12 18h40M12 22h40M12 26h40M12 30h40M12 34h30M12 38h30" stroke="#cfcfcf" />
            </>
        ),
    },
    {
        name: 'Word document',
        badge: WordArt,
        art: (
            <>
                <path d="M-4 1h60v50H-4z" fill="#f6f6f6" />
                <path d="M-4 1h60v3H-4z" fill="#4a86d8" />
                <path d="M0 8h50" stroke="#a9b6cc" strokeWidth="3" strokeDasharray="4 2" />
                <path d="M2 14h30M2 18h30M2 22h30M2 26h30M2 30h30M2 34h30M2 38h28M2 42h28" stroke="#8f8f8f" />
                <path d="M10 24h9M12 28h8" stroke="#e4e038" strokeWidth="2" />
            </>
        ),
    },
    {
        name: 'Word document 2',
        badge: WordArt,
        art: (
            <>
                <path d="M-4 1h60v50H-4z" fill="#f6f6f6" />
                <path d="M-4 1h60v3H-4z" fill="#4a86d8" />
                <path d="M0 8h50" stroke="#a9b6cc" strokeWidth="3" strokeDasharray="4 2" />
                <path d="M8 13h27M8 42h25M8 47h20" stroke="#dcd936" strokeWidth="4" />
                <path d="M8 18h27M8 21h20M18 36h24" stroke="#8f8f8f" />
                <path d="M-4 29h60" stroke="#c6c6c6" strokeWidth="2" />
            </>
        ),
    },
    {
        name: 'Trash',
        art: (
            <>
                <path d="M4 4l9 48c.5 3 26 3 27 0L48 4z" fill="#d8d8d9" transform="matrix(.96 0 0 1 1 2)" />
                <path d="M13 12l5 38M26 12v39M38 12l-4 38" stroke="#f2f2f2" strokeWidth="3" opacity=".7" />
                <path d="M5 5l6-7 8 3 6-6 7 5 8-3 7 8c-6 6-36 6-42 0z" fill="#f0f0ef" />
                <path d="M12 4l6-5 4 7zM24-1l4 7 3-7zM34 4l6-5 2 6z" fill="#4a4d52" />
                <path d="M29 2l4 4" stroke="#d9543c" strokeWidth="2" />
                <ellipse cx="26" cy="6" rx="22" ry="4" fill="none" stroke="#eeeeee" strokeWidth="1.500" />
            </>
        ),
    },
]

const DockGradients: React.FC = () => (
    <svg className="absolute h-0 w-0" aria-hidden="true">
        <defs>
            <clipPath id="tile">
                <rect width="52" height="52" rx="12" />
            </clipPath>
            {[
                ['finder', '#08c3fb', '#1a6df3'],
                ['safari', '#1fb0f6', '#1a6fe0'],
                ['mail', '#1c6ef2', '#16c8fb'],
                ['green', '#5df777', '#08c134'],
                ['podcasts', '#c657ea', '#7b27b9'],
                ['store', '#12b9f8', '#1463e6'],
                ['fox', '#ffc93a', '#f5156c'],
                ['foxglobe', '#a04be0', '#4c2fb5'],
                ['pdf', '#f5544a', '#e51a0b'],
                ['globe', '#a8dcff', '#5fb0f2'],
            ].map(([id, from, to]) => (
                <linearGradient key={id} id={id} x1="0" y1="0" x2="0" y2="1">
                    <stop offset="0" stopColor={from} />
                    <stop offset="1" stopColor={to} />
                </linearGradient>
            ))}
        </defs>
    </svg>
)

const DockItem: React.FC<DockApp> = ({ name, running, badge, art }) => (
    <button aria-label={name} className="relative flex flex-1 flex-col items-center gap-2 pt-3">
        <svg className="h-[52px] w-[52px] overflow-visible" viewBox="0 0 52 52" aria-hidden="true">
            {art}
        </svg>
        {running && <span className="h-2 w-2 rounded-full bg-black" />}
        {badge && (
            <span className="absolute top-1.5 right-0 flex h-6 min-w-6 items-center justify-center rounded-full bg-[#f2453d] px-1 text-[13px] text-white">
                {badge}
            </span>
        )}
    </button>
)

const Dock: React.FC = () => (
    <footer className="absolute right-[51px] bottom-[10px] left-[50px] flex h-[86px] rounded-[24px] border-2 border-[#8e8f98] bg-[linear-gradient(90deg,#6a6c7a,#707482_45%,#77767c_68%,#7e7075)] px-1 shadow-[0_0_100px_rgba(0,0,0,0.5)]">
        <DockGradients />
        {APPS.map((app) => (
            <DockItem key={app.name} {...app} />
        ))}
        <div className="flex w-[30px] justify-center pt-2.5">
            <span className="h-[62px] w-0.5 bg-[#4b4c55]" />
        </div>
        {RECENT_APPS.map((app) => (
            <DockItem key={app.name} {...app} />
        ))}
        <div className="flex w-[30px] justify-center pt-2.5">
            <span className="h-[62px] w-0.5 bg-[#4b4c55]" />
        </div>
        {MINIMISED.map(({ name, art, badge }) => (
            <DockItem
                key={name}
                name={name}
                art={
                    <>
                        {name === 'Diagram' ? <g transform="scale(1 .7) translate(0 3)">{art}</g> : art}
                        {badge && <g transform="translate(36 34) scale(.4)">{badge}</g>}
                    </>
                }
            />
        ))}
    </footer>
)

export default function App() {
    return (
        <div className="relative flex h-screen flex-col overflow-hidden bg-[linear-gradient(90deg,#0b0e1c,#10101a_55%,#2c1f24)] font-[Inter,sans-serif]">
            <div className="absolute inset-x-0 top-0 h-60 bg-[linear-gradient(90deg,#525b8c,#7480b0_42%,#a3aed8_72%,#c3c4e0_90%,#a9aed2)]" />
            {/* edge of the window behind */}
            <div className="absolute top-[61px] left-0 flex h-10 w-[2023px] rounded-tr-[16px] border-t border-[#f4f4f4] bg-[#d3d3d3] shadow-[0_0_3px_#222222]">
                <div className="w-[620px] border-r-2 border-[#a9a9a9] bg-[#dadada]" />
            </div>
            <div className="relative flex flex-1 flex-col overflow-hidden">
                <MenuBar />
                <div className="mt-[22px] mb-[84px] flex min-h-0 flex-1 flex-col overflow-hidden rounded-[20px] shadow-[0_0_3px_#222222]">
                    <TabStrip />
                    <Toolbar />
                    <AssessmentPage />
                </div>
            </div>
            <Dock />
        </div>
    )
}
